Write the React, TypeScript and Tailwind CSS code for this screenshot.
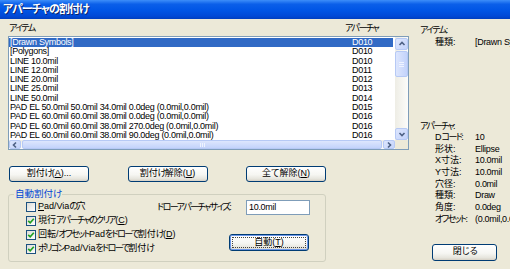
import React from 'react';

const items: [string, string][] = [
  ['[Drawn Symbols]', 'D010'],
  ['[Polygons]', 'D010'],
  ['LINE 10.0mil', 'D010'],
  ['LINE 12.0mil', 'D011'],
  ['LINE 20.0mil', 'D012'],
  ['LINE 25.0mil', 'D013'],
  ['LINE 50.0mil', 'D014'],
  ['PAD EL 50.0mil 50.0mil 34.0mil 0.0deg (0.0mil,0.0mil)', 'D015'],
  ['PAD EL 60.0mil 60.0mil 38.0mil 0.0deg (0.0mil,0.0mil)', 'D016'],
  ['PAD EL 60.0mil 60.0mil 38.0mil 270.0deg (0.0mil,0.0mil)', 'D016'],
  ['PAD EL 60.0mil 60.0mil 38.0mil 90.0deg (0.0mil,0.0mil)', 'D016'],
];

const details: [string, string][] = [
  ['Dコード:', '10'],
  ['形状:', 'Ellipse'],
  ['X寸法:', '10.0mil'],
  ['Y寸法:', '10.0mil'],
  ['穴径:', '0.0mil'],
  ['種類:', 'Draw'],
  ['角度:', '0.0deg'],
  ['オフセット:', '(0.0mil,0.0mil)'],
];

// kana runs are narrow in the original UI font, so squeeze them
function J({ t }: { t: string }) {
  const parts = t.split(/([\u3040-\u30ff]+)/);
  return (
    <>
      {parts.map((p, i) =>
        /[\u3040-\u30ff]/.test(p) ? (
          <span key={i} className="tracking-[-1.6px]">
            {p}
          </span>
        ) : (
          <React.Fragment key={i}>{p}</React.Fragment>
        )
      )}
    </>
  );
}

function Arrow({ dir }: { dir: 'up' | 'down' | 'left' | 'right' }) {
  const d = {
    up: 'M1.5 5 L4 2.5 L6.5 5',
    down: 'M1.5 3 L4 5.5 L6.5 3',
    left: 'M5 1.5 L2.5 4 L5 6.5',
    right: 'M3 1.5 L5.5 4 L3 6.5',
  }[dir];
  return (
    <svg width="8" height="8" viewBox="0 0 8 8">
      <path d={d} stroke="#4d6185" strokeWidth="1.6" fill="none" />
    </svg>
  );
}

function ScrollBtn({ dir, className }: { dir: 'up' | 'down' | 'left' | 'right'; className: string }) {
  return (
    <div
      className={`shrink-0 rounded-[2px] border border-[#b6c9f5] bg-[linear-gradient(135deg,#dde6fd,#c3d3fb)] flex items-center justify-center ${className}`}
    >
      <Arrow dir={dir} />
    </div>
  );
}

function XPButton({
  children,
  className,
  focus,
}: {
  children: React.ReactNode;
  className: string;
  focus?: boolean;
}) {
  return (
    <div
      className={`shrink-0 rounded-[3px] border border-[#003c74] bg-[linear-gradient(180deg,#ffffff_0%,#f6f6f2_55%,#e6e5dd_85%,#d6d0c5_100%)] flex ${
        focus ? 'shadow-[inset_0_0_0_1px_#6d97ea]' : 'items-center justify-center'
      } ${className}`}
    >
      {focus ? (
        <span className="flex-1 m-[2px] border border-dotted border-[#444] flex items-center justify-center">
          {children}
        </span>
      ) : (
        children
      )}
    </div>
  );
}

function Check({ checked }: { checked?: boolean }) {
  return (
    <span className="w-[10px] h-[10px] shrink-0 border border-[#1c5180] bg-[linear-gradient(135deg,#dcdcd7,#ffffff)] flex items-center justify-center">
      {checked && (
        <svg width="8" height="8" viewBox="0 0 8 8">
          <path d="M1.2 3.8 L3.2 5.8 L6.8 1.8" stroke="#21a121" strokeWidth="1.7" fill="none" />
        </svg>
      )}
    </span>
  );
}

export default function App() {
  return (
    <div className="w-[510px] h-[269px] overflow-hidden bg-[#ece9d8] text-black text-[9px] font-['Liberation_Sans','Noto_Sans_CJK_JP',sans-serif] [font-feature-settings:'palt'] flex flex-col">
      {/* title bar */}
      <div className="h-[19px] shrink-0 bg-[linear-gradient(180deg,#3d8ef9_0%,#0b5fe9_22%,#0055e5_55%,#0049d6_85%,#003fbf_100%)] flex items-center pl-[3px]">
        <span className="text-white font-bold text-[11px] tracking-[-1px] [text-shadow:1px_1px_0_#0a246a]">
          アパーチャの割付け
        </span>
      </div>

      <div className="flex flex-1">
        {/* left column */}
        <div className="w-[412px] shrink-0 pl-[8px] flex flex-col">
          <div className="h-[17px] flex items-end pb-[2px] leading-[11px]">
            <span className="w-[337px] pl-[1px]">
              <J t="アイテム" />
            </span>
            <span>
              <J t="アパーチャ" />
            </span>
          </div>

          {/* list box */}
          <div className="w-[401px] h-[114px] border border-[#7f9db9] bg-white flex flex-col">
            <div className="flex flex-1 min-h-0">
              <div className="flex-1 overflow-hidden pt-[1px] tracking-[-0.3px]">
                {items.map(([name, code], i) => (
                  <div
                    key={i}
                    className={`h-[9.3px] leading-[9.3px] flex whitespace-nowrap mr-[2px] ${
                      i === 0 ? 'bg-[#316ac5] text-white' : ''
                    }`}
                  >
                    <span className="w-[343px] shrink-0 pl-[1px]">{name}</span>
                    <span>{code}</span>
                  </div>
                ))}
              </div>
              <div className="w-[13px] shrink-0 bg-[linear-gradient(90deg,#eeede5,#fcfcfa)] flex flex-col pt-[1px]">
                <ScrollBtn dir="up" className="h-[12px] w-[13px]" />
                <div className="mt-[1px] h-[26px] w-[13px] rounded-[2px] border border-[#b6c9f5] bg-[linear-gradient(90deg,#dde6fd,#c3d3fb)] flex flex-col items-center justify-center gap-[1px]">
                  <span className="w-[5px] h-[1px] bg-[#eef3ff]" />
                  <span className="w-[5px] h-[1px] bg-[#eef3ff]" />
                  <span className="w-[5px] h-[1px] bg-[#eef3ff]" />
                </div>
                <div className="flex-1" />
                <ScrollBtn dir="down" className="h-[12px] w-[13px]" />
              </div>
            </div>
            <div className="h-[9px] shrink-0 flex bg-[linear-gradient(180deg,#eeede5,#fcfcfa)]">
              <ScrollBtn dir="left" className="w-[12px] h-[9px]" />
              <div className="ml-[1px] flex-1 rounded-[2px] border border-[#b6c9f5] bg-[linear-gradient(180deg,#dde6fd,#c3d3fb)] flex items-center justify-center gap-[1px]">
                <span className="w-[1px] h-[4px] bg-[#eef3ff]" />
                <span className="w-[1px] h-[4px] bg-[#eef3ff]" />
                <span className="w-[1px] h-[4px] bg-[#eef3ff]" />
              </div>
              <ScrollBtn dir="right" className="ml-[1px] w-[12px] h-[9px]" />
              <div className="w-[13px] shrink-0 bg-[#ece9d8]" />
            </div>
          </div>

          {/* buttons */}
          <div className="mt-[16px] w-[317px] ml-[1px] flex justify-between">
            <XPButton className="w-[80px] h-[16px]">
              <span>
                <J t="割付け(" />
                <span className="underline">A</span>)...
              </span>
            </XPButton>
            <XPButton className="w-[80px] h-[16px]">
              <span>
                <J t="割付け解除(" />
                <span className="underline">U</span>)
              </span>
            </XPButton>
            <XPButton className="w-[80px] h-[16px]">
              <span>
                全て解除(<span className="underline">N</span>)
              </span>
            </XPButton>
          </div>

          {/* auto assign group */}
          <div className="mt-[12px] relative w-[318px] h-[68px] border border-[#d0d0bf] rounded-[3px] flex">
            <span className="absolute left-[5px] top-[-7px] px-[1px] bg-[#ece9d8] text-[#0046d5] text-[9.5px] leading-[12px]">
              自動割付<span className="tracking-[-1.5px]">け</span>
            </span>
            <div className="w-[148px] shrink-0 pl-[17px] pt-[5px] flex flex-col">
              {[
                { checked: false, label: <><span className="underline">P</span><J t="ad/Viaの穴" /></> },
                { checked: true, label: <><J t="現行アパーチャのクリア(" /><span className="underline">C</span>)</> },
                { checked: true, label: <><J t="回転/オフセットPadをドローで割付け(" /><span className="underline">D</span>)</> },
                { checked: true, label: <J t="ポリゴンPad/Viaをドローで割付け" /> },
              ].map((r, i) => (
                <div key={i} className="h-[14px] flex items-center gap-[2px] whitespace-nowrap">
                  <Check checked={r.checked} />
                  <span>{r.label}</span>
                </div>
              ))}
            </div>
            <div className="flex flex-col pt-[5px]">
              <div className="h-[15px] flex items-center">
                <span className="w-[89px] whitespace-nowrap">
                  <J t="ドローアパーチャサイズ:" />
                </span>
                <div className="w-[64px] h-[15px] border border-[#7f9db9] bg-white pl-[2px] flex items-center tracking-[-0.3px]">
                  10.0mil
                </div>
              </div>
              <XPButton focus className="mt-[19px] ml-[72px] w-[80px] h-[17px]">
                <span>
                  自動(<span className="underline">T</span>)
                </span>
              </XPButton>
            </div>
          </div>
        </div>

        {/* right panel */}
        <div className="flex-1 pl-[8px] pt-[5px] flex flex-col whitespace-nowrap">
          <div className="h-[12px] leading-[12px]">
            <J t="アイテム:" />
          </div>
          <div className="h-[12px] leading-[12px] flex pl-[15px]">
            <span className="w-[40px] shrink-0">種類:</span>
            <span className="tracking-[-0.3px]">[Drawn Symbols]</span>
          </div>
          <div className="mt-[72px] h-[12px] leading-[12px]">
            <J t="アパーチャ:" />
          </div>
          {details.map(([k, v]) => (
            <div key={k} className="h-[11.7px] leading-[11.7px] flex pl-[15px]">
              <span className="w-[40px] shrink-0">
                <J t={k} />
              </span>
              <span className="tracking-[-0.3px]">{v}</span>
            </div>
          ))}
          <XPButton className="mt-[18px] ml-[12px] w-[65px] h-[17px]">
            <span>
              閉じ<span className="tracking-[-1.5px]">る</span>
            </span>
          </XPButton>
        </div>
      </div>
    </div>
  );
}
